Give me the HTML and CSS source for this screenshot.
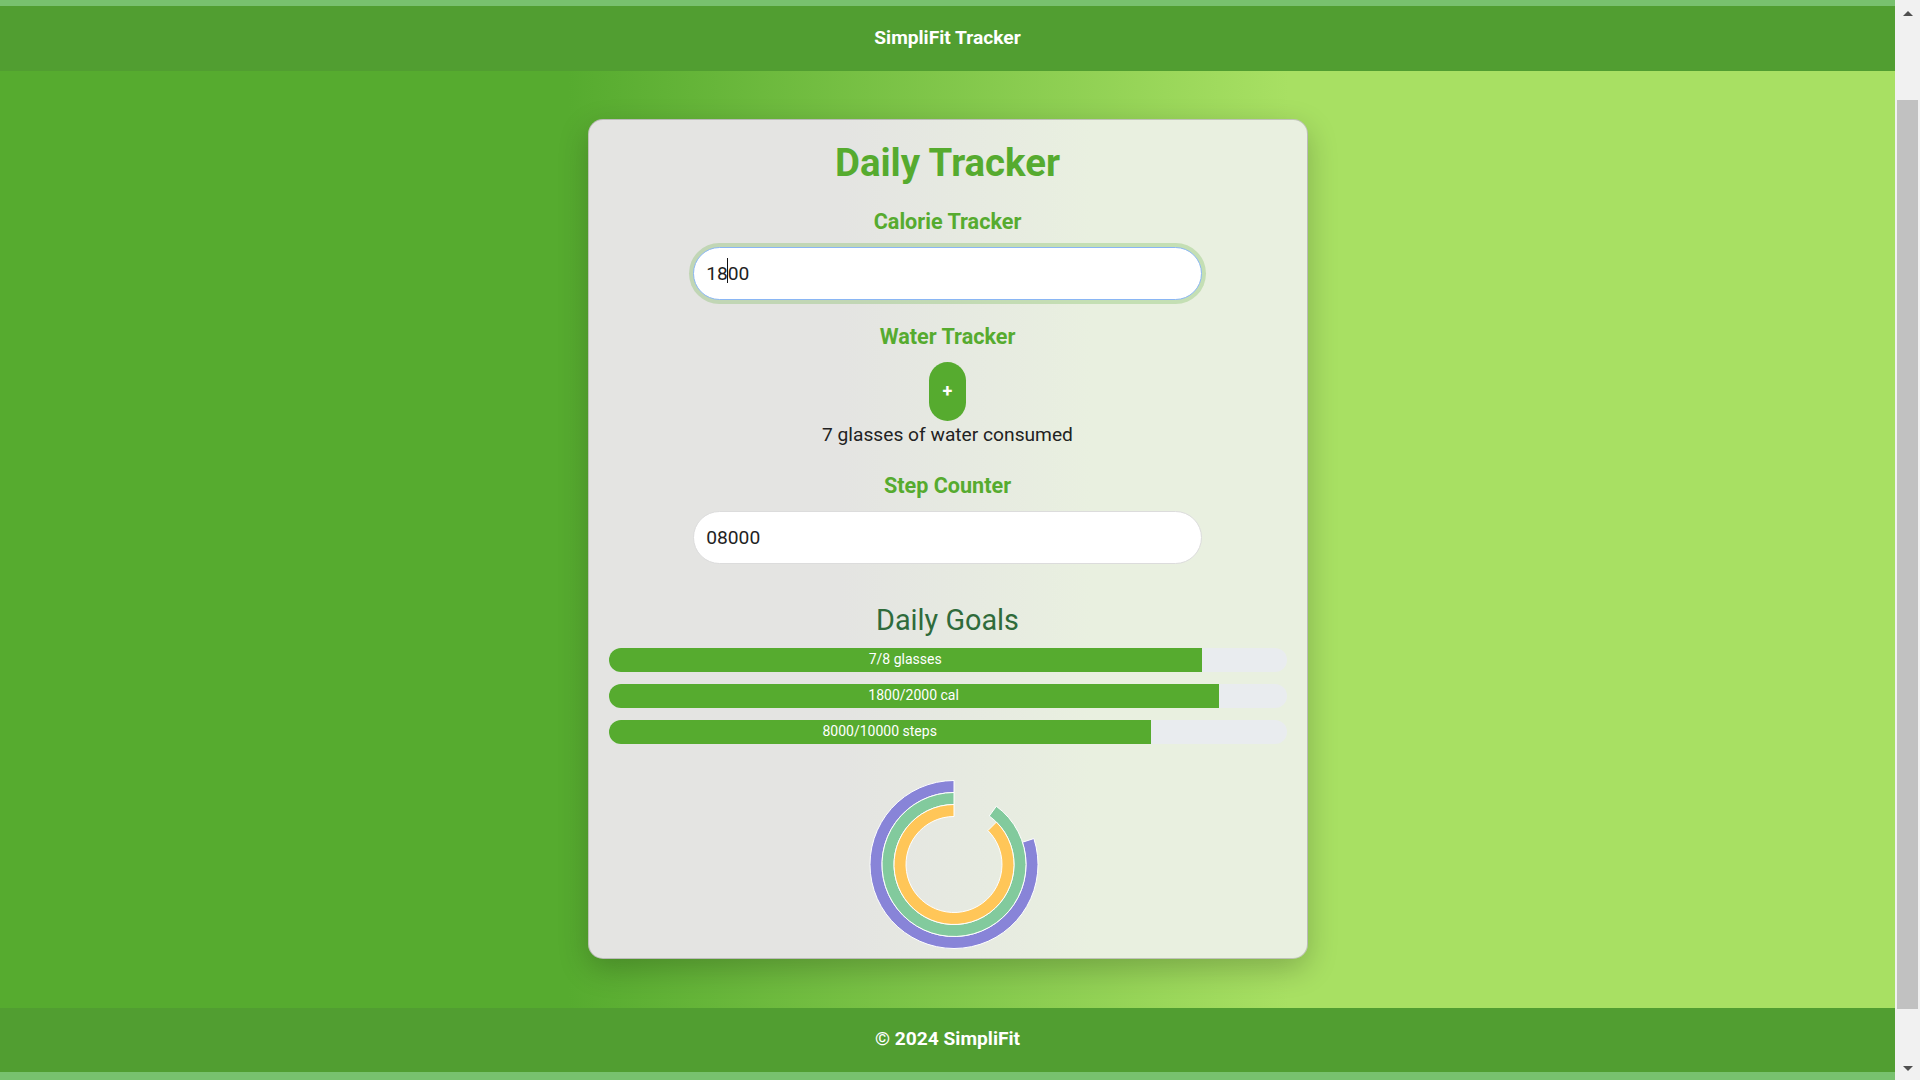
FILE: index.html
```html
<!DOCTYPE html>
<html lang="en">
<head>
<meta charset="utf-8">
<title>SimpliFit Tracker</title>
<link rel="stylesheet" href="styles.css">
</head>
<body>
<div class="page">
  <header class="site-header">SimpliFit Tracker</header>
  <main class="site-main">
    <section class="card">
      <h1 class="card-title">Daily Tracker</h1>

      <h3 class="section-title">Calorie Tracker</h3>
      <div class="field">
        <input class="text-input is-focused" type="text" value="1800">
        <span class="caret"></span>
      </div>

      <h3 class="section-title">Water Tracker</h3>
      <button class="add-btn" type="button">+</button>
      <p class="water-text">7 glasses of water consumed</p>

      <h3 class="section-title">Step Counter</h3>
      <div class="field">
        <input class="text-input" type="text" value="08000">
      </div>

      <h2 class="goals-title">Daily Goals</h2>
      <div class="bars">
        <div class="bar"><div class="bar-fill" style="width:87.5%">7/8 glasses</div></div>
        <div class="bar"><div class="bar-fill" style="width:90%">1800/2000 cal</div></div>
        <div class="bar"><div class="bar-fill" style="width:80%">8000/10000 steps</div></div>
      </div>

      <div class="chart">
        <svg class="rings" width="220" height="194" viewBox="0 0 220 194">
          <path d="M195.89 94.54 A84 84 0 1 1 116 36.5 L116 48.5 A72 72 0 1 0 184.48 98.25 Z" fill="#8884d8" stroke="#fff" stroke-width="1"/>
          <path d="M158.32 62.25 A72 72 0 1 1 116 48.5 L116 60.5 A60 60 0 1 0 151.27 71.96 Z" fill="#82ca9d" stroke="#fff" stroke-width="1"/>
          <path d="M158.43 78.07 A60 60 0 1 1 116 60.5 L116 72.5 A48 48 0 1 0 149.94 86.56 Z" fill="#ffc658" stroke="#fff" stroke-width="1"/>
        </svg>
      </div>
    </section>
  </main>
  <footer class="site-footer">© 2024 SimpliFit</footer>
</div>
<div class="scrollbar" aria-hidden="true">
  <div class="sb-btn"><span class="sb-arrow-up"></span></div>
  <div class="sb-thumb"></div>
  <div class="sb-spacer"></div>
  <div class="sb-btn"><span class="sb-arrow-down"></span></div>
</div>
</body>
</html>
```

FILE: styles.css
```css
html, body {
  margin: 0;
  height: 100%;
  overflow: hidden;
}

body {
  display: flex;
  font-family: Roboto, "Liberation Sans", Arial, sans-serif;
  color: #222;
  background: #f1f1f1;
}

.page {
  flex: 1;
  display: flex;
  flex-direction: column;
  padding: 6px 0 9px;
  background: #78c16e;
}

.site-header,
.site-footer {
  background: #519e31;
  color: #fff;
  font-weight: 700;
  font-size: 19.2px;
  line-height: 22px;
  text-align: center;
}

.site-header {
  padding: 21px 0 22px;
}

.site-footer {
  padding: 20px 0 22px;
}

.site-main {
  background: linear-gradient(to right, #56ab2f 30%, #a8e063 68%);
  padding: 48px 0 49px;
  display: flex;
  justify-content: center;
}

.card {
  width: 720px;
  box-sizing: border-box;
  padding: 20px;
  border: 1px solid rgba(0, 0, 0, 0.18);
  border-radius: 15px;
  background: linear-gradient(to right, #e4e4e2 35%, #e9f0e0 70%);
  box-shadow: 0 10px 30px rgba(0, 0, 0, 0.22);
  text-align: center;
}

.card-title {
  margin: 0;
  font-size: 38.4px;
  line-height: normal;
  font-weight: 700;
  color: #56ab2f;
}

.section-title {
  margin: 24px 0 13px;
  font-size: 21.6px;
  line-height: normal;
  font-weight: 700;
  color: #56ab2f;
}

.field {
  position: relative;
  width: 75%;
  margin: 0 auto;
}

.text-input {
  display: block;
  width: 100%;
  box-sizing: border-box;
  padding: 14px 12px;
  font-family: Roboto, "Liberation Sans", Arial, sans-serif;
  font-size: 19.2px;
  line-height: normal;
  color: #222;
  background: #fff;
  border: 1px solid #dcdcdc;
  border-radius: 27px;
  outline: none;
}

.text-input.is-focused {
  border-color: #8ab6f4;
  box-shadow: 0 0 0 4px rgba(86, 171, 47, 0.25);
}

.caret {
  position: absolute;
  left: 34px;
  top: 11px;
  width: 1px;
  height: 25px;
  background: #111;
}

.add-btn {
  display: inline-block;
  margin: 0;
  padding: 20px 13.5px;
  border: none;
  border-radius: 25px;
  background: #56ab2f;
  color: #fff;
  font-family: Roboto, "Liberation Sans", Arial, sans-serif;
  font-size: 18px;
  font-weight: 700;
  line-height: 18.75px;
  vertical-align: top;
}

.water-text {
  margin: 2px 0 27px;
  font-size: 19.2px;
  line-height: normal;
  color: #222;
}

.goals-title {
  margin: 39.5px 0 10.5px;
  font-size: 28.8px;
  line-height: normal;
  font-weight: 400;
  color: #2f6b3b;
}

.bars {
  display: flex;
  flex-direction: column;
  gap: 12px;
}

.bar {
  height: 24px;
  border-radius: 12px;
  background: #e9ecef;
  overflow: hidden;
}

.bar-fill {
  height: 100%;
  background: #56ab2f;
  color: #fff;
  font-size: 14px;
  line-height: 23px;
  text-align: center;
  white-space: nowrap;
}

.chart {
  height: 194px;
  display: flex;
  justify-content: center;
}

.rings {
  overflow: visible;
}

/* imitation of the browser's classic scrollbar */
.scrollbar {
  width: 25px;
  flex: none;
  display: flex;
  flex-direction: column;
  align-items: center;
  background: #f1f1f1;
}

.sb-btn {
  height: 17px;
  width: 100%;
  display: flex;
  align-items: center;
  justify-content: center;
}

.sb-arrow-up,
.sb-arrow-down {
  width: 0;
  height: 0;
  border-left: 5px solid transparent;
  border-right: 5px solid transparent;
}

.sb-arrow-up {
  border-bottom: 5px solid #505050;
  margin-top: 10px;
}

.sb-arrow-down {
  border-top: 5px solid #505050;
  margin-bottom: 6px;
}

.sb-thumb {
  margin-top: 83px;
  width: 21px;
  height: 909px;
  background: #c1c1c1;
}

.sb-spacer {
  flex: 1;
}
```
